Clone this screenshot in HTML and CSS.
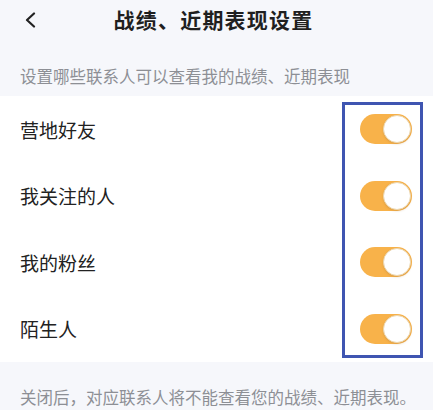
FILE: index.html
```html
<!DOCTYPE html>
<html lang="zh">
<head>
<meta charset="utf-8">
<link rel="stylesheet" href="styles.css">
</head>
<body>
<div class="page">
  <header class="header">
    <svg class="back" width="12" height="16" viewBox="0 0 12 16"><path d="M10 1.5 L3 8 L10 14.5" fill="none" stroke="#222" stroke-width="2.2" stroke-linecap="round" stroke-linejoin="round"/></svg>
    <h1 class="title">战绩、近期表现设置</h1>
  </header>
  <p class="hint">设置哪些联系人可以查看我的战绩、近期表现</p>
  <ul class="list">
    <li class="row"><span class="label">营地好友</span><span class="toggle"><span class="knob"></span></span></li>
    <li class="row"><span class="label">我关注的人</span><span class="toggle"><span class="knob"></span></span></li>
    <li class="row"><span class="label">我的粉丝</span><span class="toggle"><span class="knob"></span></span></li>
    <li class="row"><span class="label">陌生人</span><span class="toggle"><span class="knob"></span></span></li>
  </ul>
  <p class="footnote">关闭后，对应联系人将不能查看您的战绩、近期表现。</p>
  <div class="highlight"></div>
</div>
</body>
</html>
```

FILE: styles.css
```css
* { box-sizing: border-box; margin: 0; padding: 0; }
html, body { width: 433px; height: 410px; overflow: hidden; }
body {
  background: #f6f7fb;
  font-family: "Noto Sans CJK SC", "Noto Sans", sans-serif;
  color: #222;
}
.page { position: relative; width: 433px; height: 410px; }
.header {
  position: relative;
  height: 38px;
  display: flex;
  align-items: center;
  justify-content: center;
}
.back { position: absolute; left: 24px; top: 12px; }
.title {
  font-size: 21px;
  font-weight: 600;
  color: #1f1f1f;
  line-height: 38px;
  letter-spacing: 1.2px;
  margin-left: -6px;
}
.hint {
  font-size: 16.5px;
  color: #8d8f95;
  line-height: 22px;
  padding: 27px 20px 9px;
}
.list {
  list-style: none;
  background: #fff;
}
.row {
  height: 66.5px;
  display: flex;
  align-items: center;
  justify-content: space-between;
  padding: 0 21px 0 20px;
}
.label { font-size: 19px; color: #222; }
.toggle {
  width: 52px;
  height: 30px;
  border-radius: 15px;
  background: #f8b24a;
  display: flex;
  align-items: center;
  justify-content: flex-end;
  padding-right: 1px;
}
.knob {
  width: 28px;
  height: 28px;
  border-radius: 50%;
  background: #fff;
  border: 1px solid #ecd6ae;
  box-shadow: 0 1px 2px rgba(180,130,60,0.35);
}
.footnote {
  font-size: 16.5px;
  color: #8d8f95;
  line-height: 22px;
  padding: 24px 20px 0;
  white-space: nowrap;
}
.highlight {
  position: absolute;
  left: 342px;
  top: 102px;
  width: 81px;
  height: 256px;
  border: 3px solid #3f55b1;
}
```
